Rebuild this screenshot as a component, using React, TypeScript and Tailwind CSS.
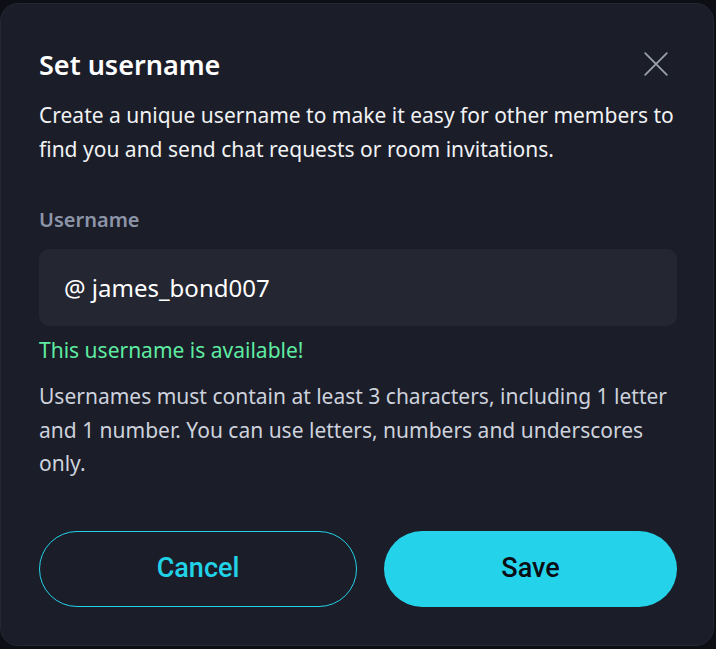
import React from "react";

export default function App() {
  return (
    <div className="w-[716px] h-[649px] bg-[#0d0f15] overflow-hidden" style={{ fontFamily: '"Noto Sans", "Open Sans", sans-serif' }}>
      <div className="mt-[3px] w-[714px] h-[643px] rounded-[18px] bg-[#1b1d29] border border-[#242734] pl-[38px] pr-[36px] pt-[40px] flex flex-col">
        <div className="flex items-center justify-between h-[40px]">
          <h1 className="text-[27px] font-semibold text-white leading-none">Set username</h1>
          <button className="mr-[8px] text-[#9ca3af]" aria-label="Close">
            <svg width="26" height="26" viewBox="0 0 24 24" fill="none" stroke="currentColor" strokeWidth="1.6" strokeLinecap="round">
              <path d="M2 2L22 22M22 2L2 22" />
            </svg>
          </button>
        </div>
        <p className="mt-[14px] text-[21px] leading-[34px] text-[#f1f2f4]">
          Create a unique username to make it easy for other members to find you and send chat requests or room invitations.
        </p>
        <label className="mt-[39px] text-[20px] font-semibold text-[#8d95a8] leading-[30px]">Username</label>
        <div className="mt-[14px] h-[77px] w-[638px] rounded-[10px] bg-[#242632] flex items-center pl-[25px] text-[24px] text-white">
          @&nbsp;james_bond007
        </div>
        <p className="mt-[9px] text-[21px] leading-[30px] text-[#5eeca2]">This username is available!</p>
        <p className="mt-[15px] text-[21px] leading-[33.5px] text-[#cdd2dc]">
          Usernames must contain at least 3 characters, including 1 letter and 1 number. You can use letters, numbers and underscores only.
        </p>
        <div className="mt-[50px] flex gap-[27px] w-[638px]" style={{ fontFamily: 'Roboto, "Liberation Sans", sans-serif' }}>
          <button className="w-[318px] h-[76px] rounded-full border border-[#22d3e8] text-[#22d3e8] text-[27px] font-medium">Cancel</button>
          <button className="w-[293px] h-[76px] rounded-full bg-[#24d3e9] text-[#0b0d14] text-[27px] font-medium">Save</button>
        </div>
      </div>
    </div>
  );
}
